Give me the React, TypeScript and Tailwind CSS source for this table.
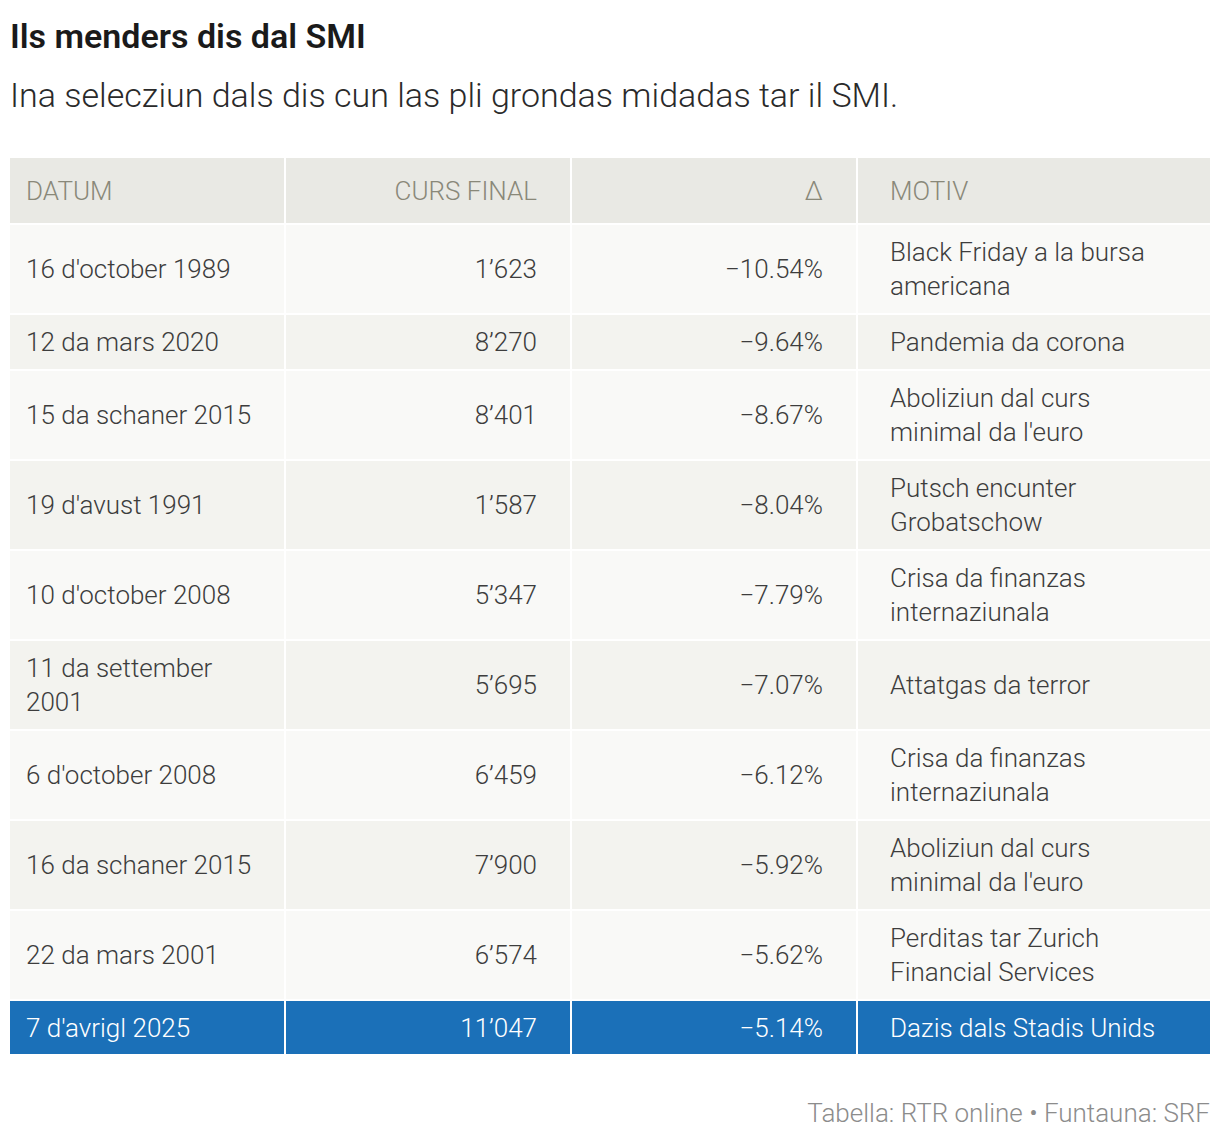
import React from "react";

type Row = { date: string; close: string; delta: string; reason: string };

const ROWS: Row[] = [
  { date: "16 d'october 1989", close: "1’623", delta: "−10.54%", reason: "Black Friday a la bursa americana" },
  { date: "12 da mars 2020", close: "8’270", delta: "−9.64%", reason: "Pandemia da corona" },
  { date: "15 da schaner 2015", close: "8’401", delta: "−8.67%", reason: "Aboliziun dal curs minimal da l'euro" },
  { date: "19 d'avust 1991", close: "1’587", delta: "−8.04%", reason: "Putsch encunter Grobatschow" },
  { date: "10 d'october 2008", close: "5’347", delta: "−7.79%", reason: "Crisa da finanzas internaziunala" },
  { date: "11 da settember 2001", close: "5’695", delta: "−7.07%", reason: "Attatgas da terror" },
  { date: "6 d'october 2008", close: "6’459", delta: "−6.12%", reason: "Crisa da finanzas internaziunala" },
  { date: "16 da schaner 2015", close: "7’900", delta: "−5.92%", reason: "Aboliziun dal curs minimal da l'euro" },
  { date: "22 da mars 2001", close: "6’574", delta: "−5.62%", reason: "Perditas tar Zurich Financial Services" },
];

const HIGHLIGHT: Row = { date: "7 d'avrigl 2025", close: "11’047", delta: "−5.14%", reason: "Dazis dals Stadis Unids" };

export default function App() {
  return (
    <div className="min-h-[1146px] bg-white px-[10px] pt-[16px] font-['Roboto',sans-serif] text-[#3d3d3d]">
      <h1 className="text-[34px] font-semibold leading-[40px] text-[#1a1a1a]">Ils menders dis dal SMI</h1>
      <p className="mt-[17px] text-[34px] font-light leading-[44px] text-[#2a2a2a]">
        Ina selecziun dals dis cun las pli grondas midadas tar il SMI.
      </p>

      <table className="-mx-[2px] mt-[39px] table-fixed border-separate border-spacing-[2px] text-[26px] font-light leading-[34px]">
        <colgroup>
          <col className="w-[274px]" />
          <col className="w-[284px]" />
          <col className="w-[284px]" />
          <col className="w-[352px]" />
        </colgroup>
        <thead>
          <tr className="bg-[#e9e9e4] text-[#898879]">
            <th className="h-[65px] pl-[16px] text-left font-light">DATUM</th>
            <th className="pr-[33px] text-right font-light">CURS FINAL</th>
            <th className="pr-[33px] text-right font-light">Δ</th>
            <th className="pl-[32px] text-left font-light">MOTIV</th>
          </tr>
        </thead>
        <tbody>
          {ROWS.map((r, i) => (
            <tr key={r.date} className={i % 2 === 0 ? "bg-[#f9f9f7]" : "bg-[#f3f3ef]"}>
              <td className="py-[10px] pl-[16px] pr-[16px]">{r.date}</td>
              <td className="pr-[33px] text-right">{r.close}</td>
              <td className="pr-[33px] text-right">{r.delta}</td>
              <td className="py-[10px] pl-[32px] pr-[32px]">{r.reason}</td>
            </tr>
          ))}
          <tr className="bg-[#1b70b8] text-white">
            <td className="h-[53px] pl-[16px]">{HIGHLIGHT.date}</td>
            <td className="pr-[33px] text-right">{HIGHLIGHT.close}</td>
            <td className="pr-[33px] text-right">{HIGHLIGHT.delta}</td>
            <td className="pl-[32px]">{HIGHLIGHT.reason}</td>
          </tr>
        </tbody>
      </table>

      <p className="mt-[40px] text-right text-[26px] font-light leading-[34px] text-[#8c8c8c]">
        Tabella: RTR online • Funtauna: SRF
      </p>
    </div>
  );
}
